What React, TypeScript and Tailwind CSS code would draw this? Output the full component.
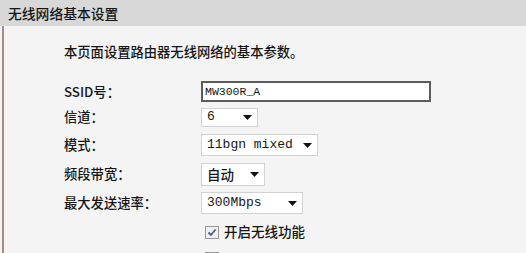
import React from 'react';

const CJK = "font-['Noto_Sans_CJK_SC',sans-serif]";
const MONO = "font-['Liberation_Mono',monospace]";

const Caret = () => (
  <svg width="9" height="5" viewBox="0 0 9 5" className="shrink-0">
    <path d="M0 0 L9 0 L4.5 5 Z" fill="#111" />
  </svg>
);

const FakeSelect: React.FC<{ value: string; width: string; height: string; cjk?: boolean }> = ({ value, width, height, cjk }) => (
  <div className={`${width} ${height} flex items-center justify-between bg-white border border-[#d2d2d2] pl-[5px] pr-[5px]`}>
    <span className={cjk ? `${CJK} text-[13.5px] font-medium` : `${MONO} text-[13px]`}>{value}</span>
    <Caret />
  </div>
);

const Row: React.FC<{ label?: string; h: string; children: React.ReactNode }> = ({ label, h, children }) => (
  <div className={`flex items-center ${h}`}>
    <div className="w-[137px] shrink-0 text-[13.3px] leading-none font-medium">{label}</div>
    {children}
  </div>
);

const Box = () => (
  <div className="w-[14px] h-[13px] bg-[#eef0f3] border border-[#9a9a9a] flex items-center justify-center">
    <svg width="10" height="9" viewBox="0 0 10 9">
      <path d="M1.5 4.5 L4 7 L8.5 1.5" fill="none" stroke="#4a5f80" strokeWidth="1.8" />
    </svg>
  </div>
);

export default function App() {
  return (
    <div className={`w-[526px] h-[253px] overflow-hidden bg-[#f4f4f4] text-[#161616] ${CJK}`}>
      <div className="h-[26px] bg-[#d8d8d8] flex items-center pl-[8px] text-[13.8px] font-medium">无线网络基本设置</div>
      <div className="ml-[2px] h-full border-l-2 border-[#a88a8a] pl-[60px]">
        <p className="pt-[16px] leading-[20px] text-[13.3px] font-medium">本页面设置路由器无线网络的基本参数。</p>
        <div className="mt-[17px] flex flex-col">
          <Row label="SSID号：" h="h-[25px]">
            <div className="w-[230px] h-[21px] bg-white border-2 border-[#5c5c5c] flex items-center pl-[2px]">
              <span className={`${MONO} text-[11.5px]`}>MW300R_A</span>
            </div>
          </Row>
          <Row label="信道：" h="h-[26px]">
            <FakeSelect value="6" width="w-[57px]" height="h-[19px]" />
          </Row>
          <Row label="模式：" h="h-[30px]">
            <FakeSelect value="11bgn mixed" width="w-[117px]" height="h-[22px]" />
          </Row>
          <Row label="频段带宽：" h="h-[28px]">
            <FakeSelect value="自动" width="w-[64px]" height="h-[23px]" cjk />
          </Row>
          <Row label="最大发送速率：" h="h-[30px]">
            <FakeSelect value="300Mbps" width="w-[102px]" height="h-[22px]" />
          </Row>
          <Row h="h-[28px]">
            <div className="flex items-center gap-[5px] pl-[4px]">
              <Box />
              <span className="text-[13.5px] leading-none font-medium">开启无线功能</span>
            </div>
          </Row>
          <Row h="h-[24px]">
            <div className="pl-[4px]">
              <Box />
            </div>
          </Row>
        </div>
      </div>
    </div>
  );
}
